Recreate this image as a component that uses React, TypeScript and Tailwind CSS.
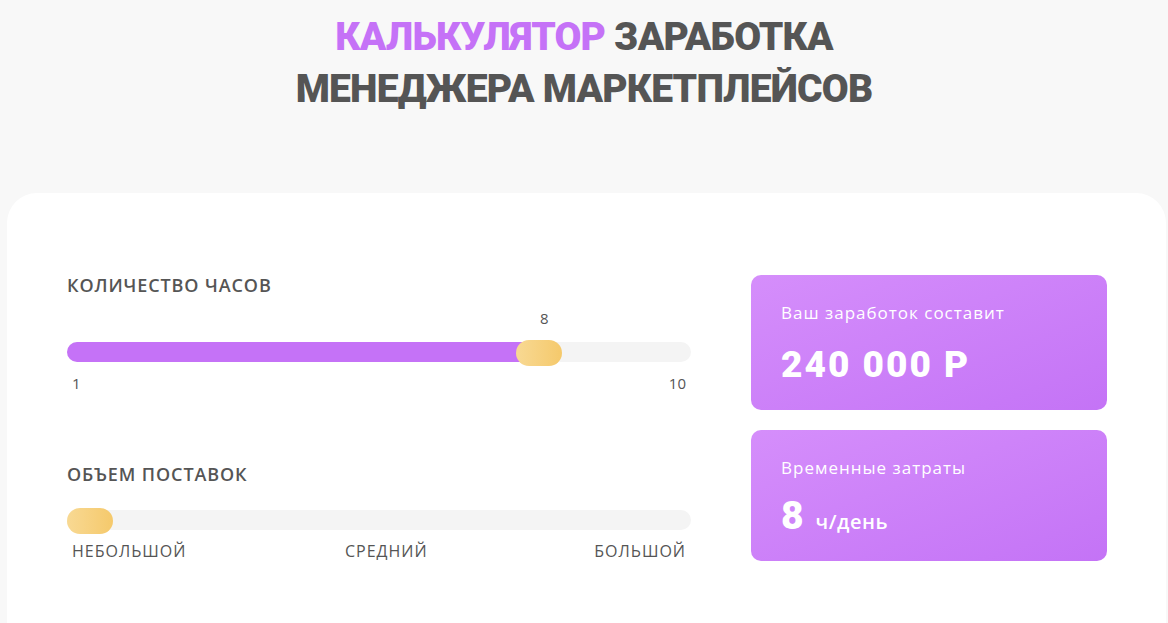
import React from "react";

const title = { fontFamily: "Roboto, 'DejaVu Sans', sans-serif" };
const body = { fontFamily: "'Open Sans', 'Noto Sans', sans-serif" };

function Track({
	fill,
	thumbLeft,
}: {
	fill: number;
	thumbLeft: number;
}) {
	return (
		<div className="relative h-5 rounded-full bg-[#f4f4f4]">
			{fill > 0 && (
				<div
					className="absolute left-0 top-0 h-5 rounded-full bg-[#c572f7]"
					style={{ width: fill }}
				/>
			)}
			<div
				className="absolute -top-[2px] h-[26px] w-[46px] rounded-[13px] bg-gradient-to-r from-[#f8d993] to-[#f5c96b]"
				style={{ left: thumbLeft }}
			/>
		</div>
	);
}

function ResultCard({
	label,
	children,
	className,
}: {
	label: string;
	children: React.ReactNode;
	className: string;
}) {
	return (
		<div
			className={`rounded-[10px] bg-gradient-to-br from-[#d58efb] to-[#c473f6] px-[30px] text-white ${className}`}
		>
			<p className="text-[17px] font-normal leading-5 tracking-[1px]" style={body}>
				{label}
			</p>
			{children}
		</div>
	);
}

export default function App() {
	return (
		<div className="min-h-screen overflow-hidden bg-[#f8f8f8]">
			{/* Header */}
			<h1
				className="pt-[11px] text-center text-[39px] font-black uppercase leading-[52px] tracking-[-0.8px] text-[#555555]"
				style={title}
			>
				<span className="text-[#c572f7]">Калькулятор</span> заработка
				<br />
				менеджера маркетплейсов
			</h1>

			{/* Calculator */}
			<div className="ml-[7px] mr-[2px] mt-[78px] flex h-[460px] gap-[60px] rounded-[30px] bg-white pl-[60px] pr-[59px] pt-[82px]">
				<div className="w-[624px]" style={body}>
					<h3 className="text-[18px] font-semibold uppercase leading-5 tracking-[0.9px] text-[#555555]">
						Количество часов
					</h3>
					<div className="relative mt-[13px] h-5 text-center">
						<span
							className="absolute text-[15px] leading-5 text-[#555555]"
							style={{ left: 473 }}
						>
							8
						</span>
					</div>
					<div className="mt-[14px]">
						<Track fill={480} thumbLeft={449} />
					</div>
					<div className="mt-[11px] flex justify-between px-[5px] text-[15px] leading-5 text-[#555555]">
						<span>1</span>
						<span>10</span>
					</div>

					<h3 className="mt-[71px] text-[18px] font-semibold uppercase leading-5 tracking-[0.9px] text-[#555555]">
						Объем поставок
					</h3>
					<div className="mt-[26px]">
						<Track fill={0} thumbLeft={0} />
					</div>
					<div className="mt-[11px] flex justify-between px-[5px] text-[16px] uppercase leading-5 tracking-[1px] text-[#555555]">
						<span>Небольшой</span>
						<span className="-ml-[8px]">Средний</span>
						<span>Большой</span>
					</div>
				</div>

				<div className="flex w-[356px] flex-col gap-5">
					<ResultCard label="Ваш заработок составит" className="h-[135px] pt-[28px]">
						<p
							className="mt-[22px] text-[37px] font-black leading-10 tracking-[2px]"
							style={title}
						>
							240 000 Р
						</p>
					</ResultCard>
					<ResultCard label="Временные затраты" className="h-[131px] pt-[28px]">
						<p className="mt-[18px] flex items-baseline gap-[12px]">
							<span className="text-[39px] font-black leading-10" style={title}>
								8
							</span>
							<span className="text-[20px] font-semibold tracking-[0.5px]" style={body}>
								ч/день
							</span>
						</p>
					</ResultCard>
				</div>
			</div>
		</div>
	);
}
